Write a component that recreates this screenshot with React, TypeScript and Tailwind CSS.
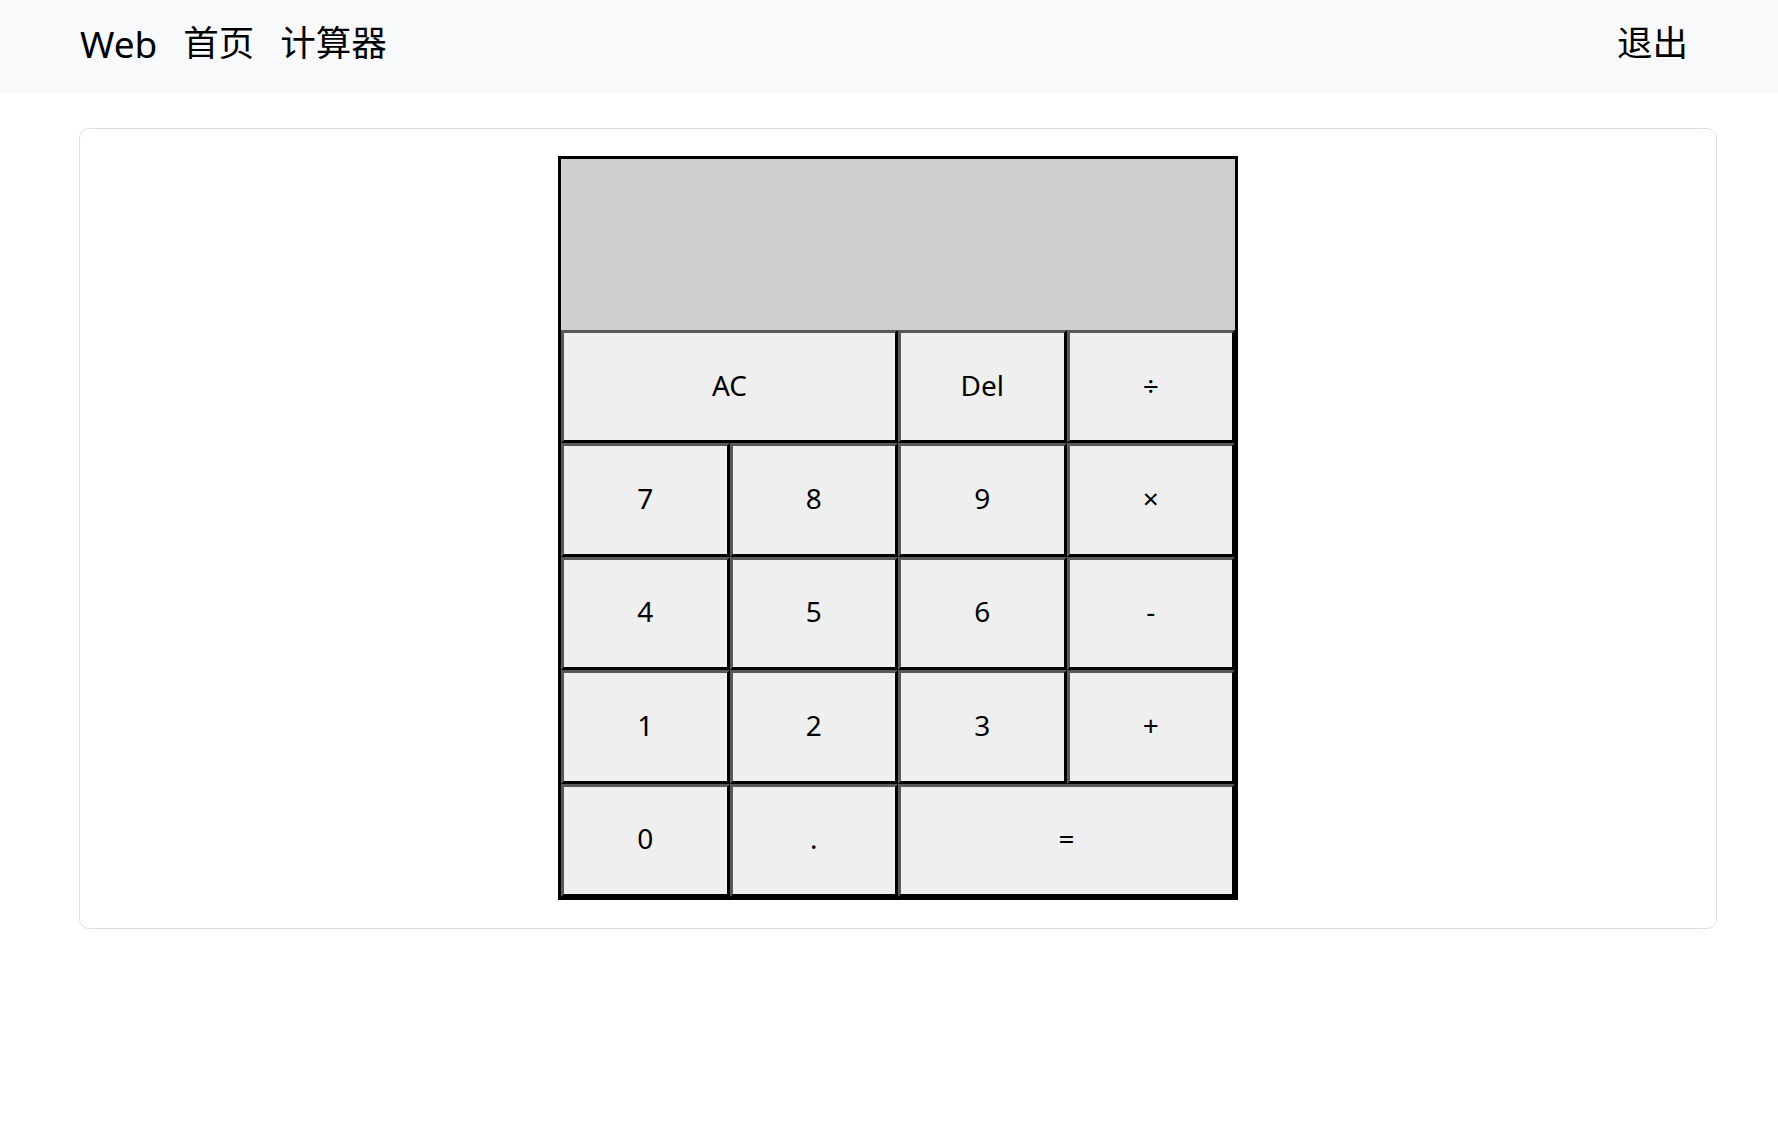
import React from "react";

const font = { fontFamily: '"Noto Sans", "Noto Sans CJK SC", sans-serif' };

function Key({ label, span2 }: { label: string; span2?: boolean }) {
  return (
    <button
      className={`${span2 ? "col-span-2" : ""} flex items-center justify-center pb-[4px] bg-[#efefef] border-[3px] border-t-[#595959] border-l-[#595959] border-b-black border-r-black text-[28px] text-black`}
    >
      {label}
    </button>
  );
}

export default function App() {
  const rows: { label: string; span2?: boolean }[] = [
    { label: "AC", span2: true },
    { label: "Del" },
    { label: "÷" },
    { label: "7" },
    { label: "8" },
    { label: "9" },
    { label: "×" },
    { label: "4" },
    { label: "5" },
    { label: "6" },
    { label: "-" },
    { label: "1" },
    { label: "2" },
    { label: "3" },
    { label: "+" },
    { label: "0" },
    { label: "." },
    { label: "=", span2: true },
  ];
  return (
    <div className="min-h-[1136px] bg-white text-black" style={font}>
      <nav className="h-[93px] bg-[#f8f9fa] flex items-center justify-between pl-[80px] pr-[90px] pb-[7px]">
        <div className="flex items-center">
          <span className="text-[37px] leading-none mr-[26px]">Web</span>
          <span className="text-[35.5px] leading-none mr-[26px]">首页</span>
          <span className="text-[35.5px] leading-none">计算器</span>
        </div>
        <span className="text-[35.5px] leading-none">退出</span>
      </nav>
      <div className="ml-[79px] mt-[35px] w-[1638px] border border-[#dcdfe3] rounded-[10px] pt-[27px] pb-[28px] flex justify-center">
        <div className="w-[680px] border-[3px] border-black grid grid-cols-4 grid-rows-[171px_repeat(5,113.4px)]">
          <div className="col-span-4 bg-[#cfcfcf]" />
          {rows.map((k, i) => (
            <Key key={i} label={k.label} span2={k.span2} />
          ))}
        </div>
      </div>
    </div>
  );
}
